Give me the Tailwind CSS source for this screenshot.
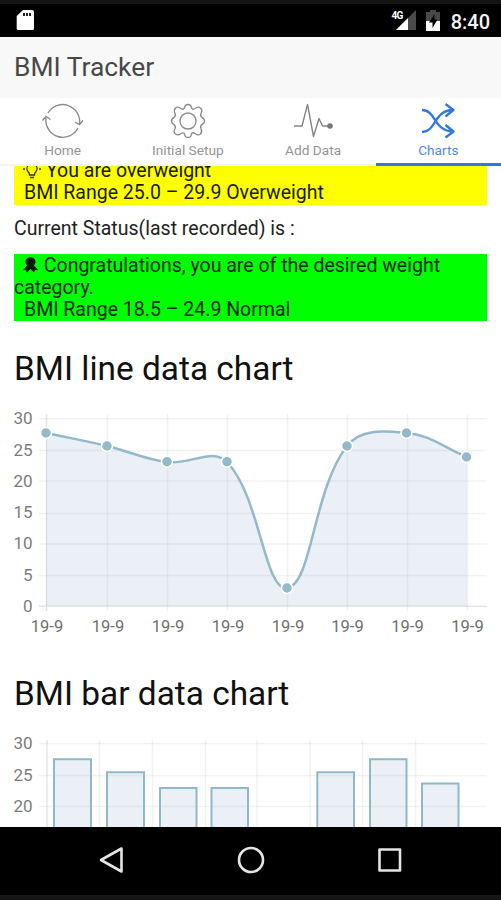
<!DOCTYPE html>
<html lang="en">
<head>
    <meta charset="UTF-8">
    <meta name="viewport" content="width=device-width, initial-scale=1.0">
    <title>BMI Tracker</title>
    <script src="https://cdn.jsdelivr.net/npm/@tailwindcss/browser@4"></script>
</head>
<body class="bg-white font-['Roboto',sans-serif]">
    <div class="w-[501px] h-[900px] flex flex-col overflow-hidden">
        <!-- Status bar -->
        <div class="h-[37px] shrink-0 bg-black border-t-4 border-[#151515] flex items-center justify-between pl-4 pr-[11px]">
            <svg class="w-5 h-6" viewBox="0 0 20 24">
                <path d="M7 1H16Q18 1 18 3V19.500Q18 21 16.500 21H2Q.7 21 .7 19.500V7Z" fill="#fff"/>
                <path d="M7 4h2v3h-2zM10 4h2v3h-2zM13 4h2v3h-2z" fill="#222"/>
            </svg>
            <div class="flex items-center">
                <svg class="w-[28px] h-6" viewBox="0 0 28 24">
                    <path d="M26 1V21H6Z" fill="#4a4a4a"/>
                    <path d="M18 9V21H6Z" fill="#fff"/>
                    <text x="1.500" y="10" font-size="10" font-weight="700" letter-spacing="-.8" fill="#fff" stroke="#000" stroke-width="2" paint-order="stroke">4G</text>
                </svg>
                <svg class="w-4 h-6 ml-[7px]" viewBox="0 0 16 24">
                    <path d="M1 3H5V1H11V3H15V22H1Z" fill="#484848"/>
                    <path d="M1 12H15V22H1Z" fill="#fff"/>
                    <path d="M9.500 5L4 13.500H7.500V19L12.500 10.500H9.500Z" fill="#000"/>
                </svg>
                <span class="ml-[10px] mt-[2px] text-[20px] leading-6 font-medium text-[#f4f4f4]">8:40</span>
            </div>
        </div>

        <!-- Title -->
        <div class="h-[61px] shrink-0 bg-[#f8f8f8] flex items-center px-[14px] pb-[2px]">
            <h1 class="text-[26.4px] leading-8 text-[#484848]">BMI Tracker</h1>
        </div>

        <!-- Tabs -->
        <div class="h-[68px] shrink-0 grid grid-cols-4 bg-white text-[13.7px] leading-4 text-[#949494]">
            <div class="flex flex-col items-center pt-1 border-b-2 border-[#f4f4f4]">
                <svg class="w-[42px] h-[38px]" viewBox="0 0 42 38" fill="none" stroke="#8c8c8c" stroke-width="1.400">
                    <path d="M6 11A17 17 0 0 1 37.500 22M36 26A17 17 0 0 1 4 16"/>
                    <path d="M33 20L37.500 22.500L41 18.500M.5 18.500L4 14.500L8.500 17.500"/>
                </svg>
                <span class="mt-[2px]">Home</span>
            </div>
            <div class="flex flex-col items-center pt-1 border-b-2 border-[#f4f4f4]">
                <svg class="w-[38px] h-[38px]" viewBox="0 0 38 38" fill="none" stroke="#8c8c8c" stroke-width="1.400">
                    <path d="M15.500 6Q16 2.500 19 2.500T22.500 6Q24 8 26 6.500Q29 4 31.500 6T32 11.500Q31 14 33 15.500Q35.500 16.500 35.500 19T33 22.500Q31 24 32 26.500Q33.500 30 31.500 32T26 31.500Q24 30 22.500 32Q22 35.500 19 35.500T15.500 32Q14 30 12 31.500Q9 34 6.500 32T6 26.500Q7 24 5 22.500Q2.500 21.500 2.500 19T5 15.500Q7 14 6 11.500Q4.500 8 6.500 6T12 6.500Q14 8 15.500 6Z"/>
                    <circle cx="19" cy="19" r="8"/>
                </svg>
                <span class="mt-[2px]">Initial Setup</span>
            </div>
            <div class="flex flex-col items-center pt-1 border-b-2 border-[#f4f4f4]">
                <svg class="w-[42px] h-[38px]" viewBox="0 0 42 38" fill="none" stroke="#858585" stroke-width="1.400" stroke-linejoin="round">
                    <path d="M2 24H10L15.500 2.500L21.500 34.500L27 16.500L30.500 24H36"/>
                    <circle cx="38" cy="24" r="2.800" fill="#777" stroke="none"/>
                </svg>
                <span class="mt-[2px]">Add Data</span>
            </div>
            <div class="flex flex-col items-center pt-1 border-b-3 border-[#2f76e8] text-[#5087ee]">
                <svg class="w-[38px] h-[38px]" viewBox="0 0 38 38" fill="none" stroke="#2f76e8" stroke-width="2.300" stroke-linejoin="round">
                    <path d="M3 8C17 8 15 29.500 34 29.500M3 30C17 30 15 8 34 8M26.500 2L34.500 8L26.500 14.500M26.500 23L34.500 29.500L26.500 35.500"/>
                </svg>
                <span class="mt-[2px]">Charts</span>
            </div>
        </div>

        <!-- Scrolled content -->
        <div class="h-[661px] shrink-0 overflow-hidden px-[14px]">
            <div class="w-[473px] -mt-[7px] bg-[#ffff00] text-[19.5px] leading-[22px] text-[#1a1a00]">
                <div class="flex items-center pl-2 h-[23px]">
                    <svg class="w-5 h-5 mr-[4px]" viewBox="0 0 20 20" fill="none" stroke="#333300" stroke-width="1.300">
                        <path d="M7.500 14Q7.500 12 6 10.500A5 5 0 1 1 14 10.500Q12.500 12 12.500 14ZM8 16.500H12M1 8H3M17 8H19M3.500 2L5 3.500M16.500 2L15 3.500"/>
                    </svg>
                    <span>You are overweight</span>
                </div>
                <div class="pl-[10px] h-[23px]">BMI Range 25.0 – 29.9 Overweight</div>
            </div>

            <p class="mt-[13px] text-[19.5px] leading-[22px] text-[#222]">Current Status(last recorded) is :</p>

            <div class="w-[473px] mt-[14px] h-[67px] pt-[1px] bg-[#00ff00] text-[19.5px] leading-[22px] text-[#002800]">
                <p class="pr-6">
                    <svg class="inline-block w-[15px] h-4 ml-[9px] mr-[1px] -mt-1" viewBox="0 0 15 16" fill="#001c00">
                        <path d="M7.500 0L10.500 1L12.300 3L12.500 6L11 8.500L15 13L12 13.200L11 15.500L7.500 12L4 15.500L3 13.200L0 13L4 8.500L2.500 6L2.700 3L4.500 1Z"/>
                    </svg>
                    Congratulations, you are of the desired weight category.
                </p>
                <p class="pl-[10px]">BMI Range 18.5 – 24.9 Normal</p>
            </div>

            <h2 class="mt-[27px] text-[33.4px] leading-[42px] text-[#111]">BMI line data chart</h2>
            <svg class="block -ml-[14px] mt-[10px] w-[501px] h-[242px]" viewBox="0 400 501 242">
                <g stroke="#000" stroke-opacity=".05" stroke-width="1.500">
                    <path d="M39 418.700H487M39 450.500H487M39 481H487M39 513.500H487M39 544H487M39 575.500H487"/>
                    <path d="M107.500 414V611M167.500 414V611M227.500 414V611M287.500 414V611M347.500 414V611M407.500 414V611M467.500 414V611"/>
                    <path d="M46.500 414V611M39 606.300H487" stroke-opacity=".1"/>
                </g>
                <path d="M46 433C70.400 438.200 82.800 440.200 107 446C131.200 451.800 142.600 458.700 167 462C190.600 465.100 212.600 446.900 227 462C260.600 497.300 264.200 591 287 588C312.200 584.600 312.700 490.300 347 446C360.700 428.300 383.600 430.900 407 433C431.600 435.300 443 447.400 467 457V606H46Z" fill="#94b5d0" fill-opacity=".2"/>
                <path d="M46 433C70.400 438.200 82.800 440.200 107 446C131.200 451.800 142.600 458.700 167 462C190.600 465.100 212.600 446.900 227 462C260.600 497.300 264.200 591 287 588C312.200 584.600 312.700 490.300 347 446C360.700 428.300 383.600 430.900 407 433C431.600 435.300 443 447.400 467 457" fill="none" stroke="#93b9ca" stroke-width="2.500"/>
                <g fill="#93b9ca" stroke="#fff" stroke-width="1.500">
                    <circle cx="46" cy="433" r="5.500"/>
                    <circle cx="107" cy="446" r="5.500"/>
                    <circle cx="167" cy="461.700" r="5.500"/>
                    <circle cx="227" cy="461.700" r="5.500"/>
                    <circle cx="287" cy="588" r="5.500"/>
                    <circle cx="347" cy="446" r="5.500"/>
                    <circle cx="406.500" cy="433" r="5.500"/>
                    <circle cx="466.500" cy="457" r="5.500"/>
                </g>
                <g font-size="17" fill="#7c7c7c" text-anchor="end">
                    <text x="32.500" y="424">30</text>
                    <text x="32.500" y="455.500">25</text>
                    <text x="32.500" y="486.500">20</text>
                    <text x="32.500" y="518">15</text>
                    <text x="32.500" y="549">10</text>
                    <text x="32.500" y="580.500">5</text>
                    <text x="32.500" y="611.500">0</text>
                </g>
                <g font-size="16.500" fill="#707070" text-anchor="middle">
                    <text x="47" y="632.300">19-9</text>
                    <text x="108" y="632.300">19-9</text>
                    <text x="168" y="632.300">19-9</text>
                    <text x="228" y="632.300">19-9</text>
                    <text x="288" y="632.300">19-9</text>
                    <text x="347.500" y="632.300">19-9</text>
                    <text x="407.500" y="632.300">19-9</text>
                    <text x="467.500" y="632.300">19-9</text>
                </g>
            </svg>

            <h2 class="mt-[31px] text-[33.4px] leading-[42px] text-[#111]">BMI bar data chart</h2>
            <svg class="block -ml-[14px] mt-[10px] w-[501px] h-[102px]" viewBox="0 725 501 102">
                <g stroke="#000" stroke-opacity=".05" stroke-width="1.500">
                    <path d="M39 743.500H487M39 775.500H487M39 806.500H487"/>
                    <path d="M99.500 740V830M152.500 740V830M205.500 740V830M257 740V830M310 740V830M362.500 740V830M415.500 740V830"/>
                    <path d="M47 740V830" stroke-opacity=".1"/>
                </g>
                <g fill="#94b5d0" fill-opacity=".2" stroke="#8fb8c9" stroke-width="2">
                    <path d="M54 830V759.300H91V830"/>
                    <path d="M107 830V772.300H144V830"/>
                    <path d="M160 830V788H196.500V830"/>
                    <path d="M211.500 830V788H248V830"/>
                    <path d="M317.300 830V772.300H354V830"/>
                    <path d="M370 830V759.300H406.500V830"/>
                    <path d="M422 830V783.500H458.500V830"/>
                </g>
                <g font-size="17" fill="#7c7c7c" text-anchor="end">
                    <text x="32.500" y="749">30</text>
                    <text x="32.500" y="780.500">25</text>
                    <text x="32.500" y="811.500">20</text>
                </g>
            </svg>
        </div>

        <!-- Navigation bar -->
        <div class="h-[73px] shrink-0 bg-black border-b-5 border-[#151515] flex justify-center items-center gap-[111px] pb-[2px]">
            <svg class="w-7 h-7" viewBox="0 0 28 28" fill="none" stroke="#e4e4e4" stroke-width="2.600" stroke-linejoin="round">
                <path d="M23.500 2.500V25.500L3 14Z"/>
            </svg>
            <svg class="w-7 h-7" viewBox="0 0 28 28" fill="none" stroke="#e4e4e4" stroke-width="2.600">
                <circle cx="14" cy="14" r="12"/>
            </svg>
            <svg class="w-7 h-7" viewBox="0 0 28 28" fill="none" stroke="#e4e4e4" stroke-width="2.600" stroke-linejoin="round">
                <path d="M3.500 3.500H24V24.500H3.500Z"/>
            </svg>
        </div>
    </div>
</body>
</html>
